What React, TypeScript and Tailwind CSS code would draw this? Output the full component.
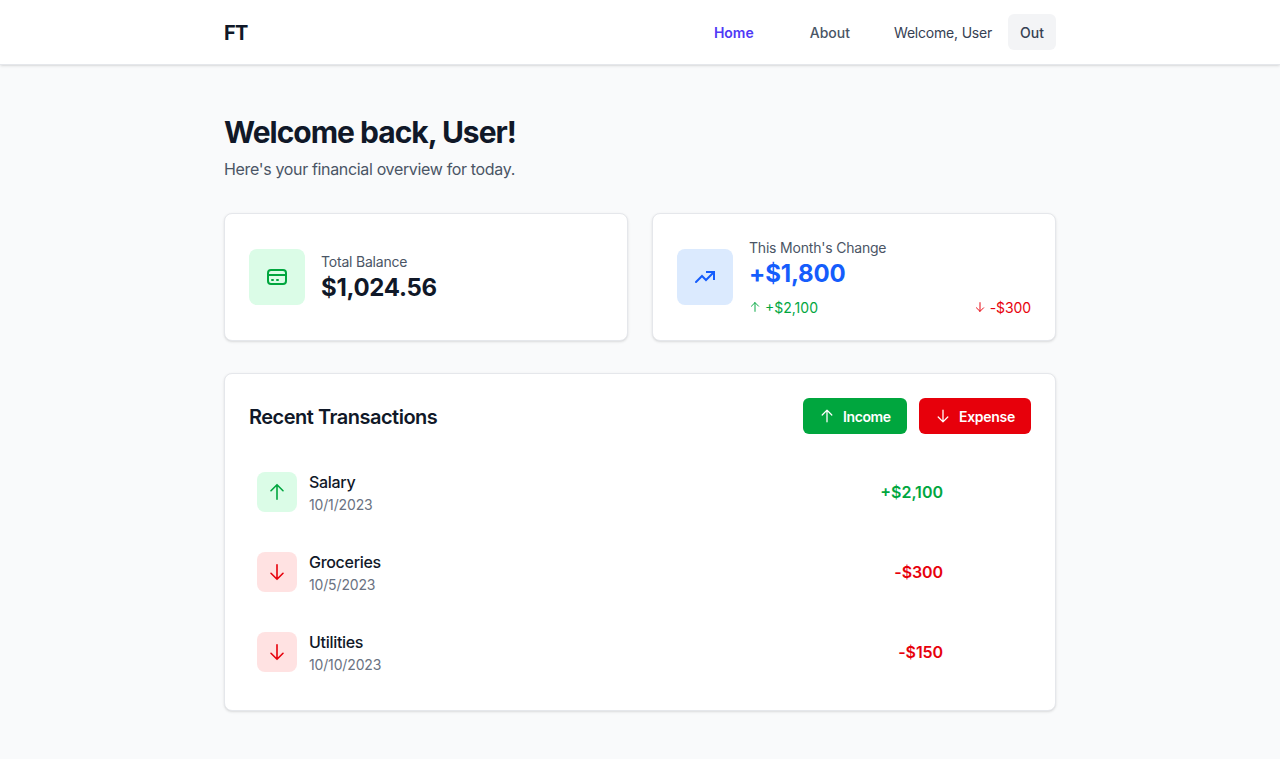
function Arrow({ up, className }: { up?: boolean; className: string }) {
  return (
    <svg viewBox="0 0 20 20" className={className} fill="none" stroke="currentColor" strokeWidth="1.6" strokeLinecap="round" strokeLinejoin="round">
      {up ? <path d="M10 17.3V2.7M4 8.7l6-6 6 6" /> : <path d="M10 2.7v14.6M4 11.3l6 6 6-6" />}
    </svg>
  );
}

function CardIcon() {
  return (
    <svg viewBox="0 0 24 24" className="size-6" fill="none" stroke="currentColor" strokeWidth="2" strokeLinecap="round" strokeLinejoin="round">
      <path d="M3 10h18M7 15h1m4 0h1m-7 4h12a3 3 0 003-3V8a3 3 0 00-3-3H6a3 3 0 00-3 3v8a3 3 0 003 3z" />
    </svg>
  );
}

function TrendIcon() {
  return (
    <svg viewBox="0 0 24 24" className="size-6" fill="none" stroke="currentColor" strokeWidth="2" strokeLinecap="square" strokeLinejoin="miter">
      <path d="M13 7h8v8" strokeLinecap="butt" />
      <path d="M21 7l-8 8-4-4-6 6" strokeLinecap="round" />
    </svg>
  );
}

const rows = [
  { name: "Salary", date: "10/1/2023", amount: "+$2,100", up: true },
  { name: "Groceries", date: "10/5/2023", amount: "-$300", up: false },
  { name: "Utilities", date: "10/10/2023", amount: "-$150", up: false },
];

export default function App() {
  return (
    <div className="min-h-[759px] bg-gray-50 font-['Inter',sans-serif] text-gray-900">
      <header className="h-[65px] border-b border-gray-200 bg-white shadow-sm">
        <div className="mx-auto flex h-16 w-[832px] items-center justify-between">
          <span className="pt-0.5 text-xl font-bold tracking-[-0.8px]">FT</span>
          <div className="flex items-center">
            <a className="mr-14 pt-0.5 text-sm font-semibold text-indigo-600">Home</a>
            <a className="mr-11 pt-0.5 text-sm font-medium text-gray-600">About</a>
            <span className="mr-4 pt-0.5 text-sm tracking-[-0.2px] text-gray-700">Welcome, User</span>
            <button className="h-9 rounded-md bg-gray-100 px-3 pt-0.5 text-sm font-medium text-gray-700">Out</button>
          </div>
        </div>
      </header>
      <main className="mx-auto w-[832px] pt-[49px]">
        <h1 className="text-3xl font-bold tracking-[-1px]">Welcome back, User!</h1>
        <p className="mt-[7px] tracking-[-0.34px] text-gray-600">Here's your financial overview for today.</p>
        <div className="mt-8 grid grid-cols-2 gap-6">
          <section className="flex h-32 items-center rounded-lg border border-gray-200 bg-white px-6 shadow-sm">
            <div className="flex size-14 items-center justify-center rounded-lg bg-green-100 text-green-600">
              <CardIcon />
            </div>
            <div className="ml-4 pt-0.5">
              <p className="text-sm tracking-[-0.2px] text-gray-600">Total Balance</p>
              <p className="text-2xl font-bold tracking-[-0.3px]">$1,024.56</p>
            </div>
          </section>
          <section className="flex h-32 items-center rounded-lg border border-gray-200 bg-white px-6 shadow-sm">
            <div className="flex size-14 items-center justify-center rounded-lg bg-blue-100 text-blue-600">
              <TrendIcon />
            </div>
            <div className="ml-4 flex-1 pt-0.5">
              <p className="text-sm tracking-[-0.2px] text-gray-600">This Month's Change</p>
              <p className="text-2xl font-bold tracking-[-0.15px] text-blue-600">+$1,800</p>
              <div className="mt-2 flex justify-between text-sm">
                <span className="flex items-center gap-1 text-green-600"><Arrow up className="mb-0.5 size-3" />+$2,100</span>
                <span className="flex items-center gap-1 tracking-[-0.1px] text-red-600"><Arrow className="mb-0.5 size-3" />-$300</span>
              </div>
            </div>
          </section>
        </div>
        <section className="mt-8 h-[338px] rounded-lg border border-gray-200 bg-white p-6 shadow-sm">
          <div className="flex h-9 items-center justify-between">
            <h2 className="pt-0.5 text-xl font-semibold tracking-[-0.5px]">Recent Transactions</h2>
            <div className="flex gap-3 text-sm font-semibold text-white">
              <button className="flex h-9 w-[104px] items-center rounded-md bg-green-600 pl-4">
                <Arrow up className="mr-2 size-4" />
                <span className="pt-0.5 tracking-[-0.4px]">Income</span>
              </button>
              <button className="flex h-9 w-28 items-center rounded-md bg-red-600 pl-4">
                <Arrow className="mr-2 size-4" />
                <span className="pt-0.5 tracking-[-0.3px]">Expense</span>
              </button>
            </div>
          </div>
          <div className="mt-[18px]">
            {rows.map((r) => (
              <div key={r.name} className="flex h-20 items-center pr-[88px] pl-2">
                <div className={r.up ? "flex size-10 items-center justify-center rounded-lg bg-green-100 text-green-600" : "flex size-10 items-center justify-center rounded-lg bg-red-100 text-red-600"}>
                  <Arrow up={r.up} className="size-5" />
                </div>
                <div className="ml-3 pt-px">
                  <p className="font-medium tracking-[-0.3px]">{r.name}</p>
                  <p className="mt-px text-sm tracking-[-0.15px] text-gray-500">{r.date}</p>
                </div>
                <span className={r.up ? "ml-auto font-semibold text-green-600" : "ml-auto font-semibold tracking-[-0.1px] text-red-600"}>{r.amount}</span>
              </div>
            ))}
          </div>
        </section>
      </main>
    </div>
  );
}
